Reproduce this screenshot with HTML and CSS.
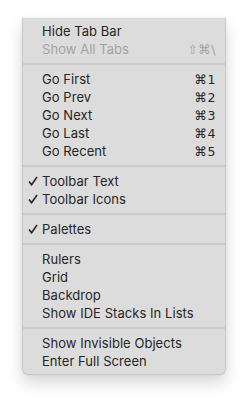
FILE: index.html
```html
<html lang="en">
<head>
    <meta charset="UTF-8">
    <title>View Menu</title>
    <link rel="stylesheet" href="styles.css">
</head>
<body>
    <div class="menu">
        <div class="item">Hide Tab Bar</div>
        <div class="item disabled">Show All Tabs<span class="key">⇧⌘\</span></div>
        <div class="sep"></div>
        <div class="item">Go First<span class="key">⌘1</span></div>
        <div class="item">Go Prev<span class="key">⌘2</span></div>
        <div class="item">Go Next<span class="key">⌘3</span></div>
        <div class="item">Go Last<span class="key">⌘4</span></div>
        <div class="item">Go Recent<span class="key">⌘5</span></div>
        <div class="sep"></div>
        <div class="item"><svg class="check" viewBox="0 0 10 10"><path d="M1 5.6 L3.6 8.8 L9 1" /></svg>Toolbar Text</div>
        <div class="item"><svg class="check" viewBox="0 0 10 10"><path d="M1 5.6 L3.6 8.8 L9 1" /></svg>Toolbar Icons</div>
        <div class="sep"></div>
        <div class="item"><svg class="check" viewBox="0 0 10 10"><path d="M1 5.6 L3.6 8.8 L9 1" /></svg>Palettes</div>
        <div class="sep"></div>
        <div class="item">Rulers</div>
        <div class="item">Grid</div>
        <div class="item">Backdrop</div>
        <div class="item">Show IDE Stacks In Lists</div>
        <div class="sep"></div>
        <div class="item">Show Invisible Objects</div>
        <div class="item">Enter Full Screen</div>
    </div>
</body>
</html>
```

FILE: styles.css
```css
body {
    margin: 0;
    padding: 18px 0 0 22px;
    background-color: #ffffff;
    font-family: Inter, "Noto Sans", "DejaVu Sans", sans-serif;
}
.menu {
    width: 202px;
    padding: 4px 0;
    background-color: #dcdcdc;
    border: 1px solid #c9c9c9;
    border-top: none;
    border-radius: 0 0 6px 6px;
    box-shadow: 0 8px 16px rgba(0, 0, 0, 0.16), 0 0 3px rgba(0, 0, 0, 0.08);
}
.item {
    position: relative;
    display: flex;
    justify-content: space-between;
    align-items: center;
    height: 18px;
    padding: 0 9px 0 19px;
    font-size: 13px;
    color: #262626;
    letter-spacing: 0.05px;
}
.item.disabled {
    color: #a3a3a3;
}
.key {
    font-family: "DejaVu Sans", sans-serif;
    font-size: 12.5px;
    letter-spacing: 0.5px;
}
.check {
    position: absolute;
    left: 5px;
    top: 4px;
    width: 10px;
    height: 10px;
    fill: none;
    stroke: #262626;
    stroke-width: 1.6;
}
.sep {
    height: 2px;
    margin: 5px 0;
    background-color: #cbcbcb;
}
```
